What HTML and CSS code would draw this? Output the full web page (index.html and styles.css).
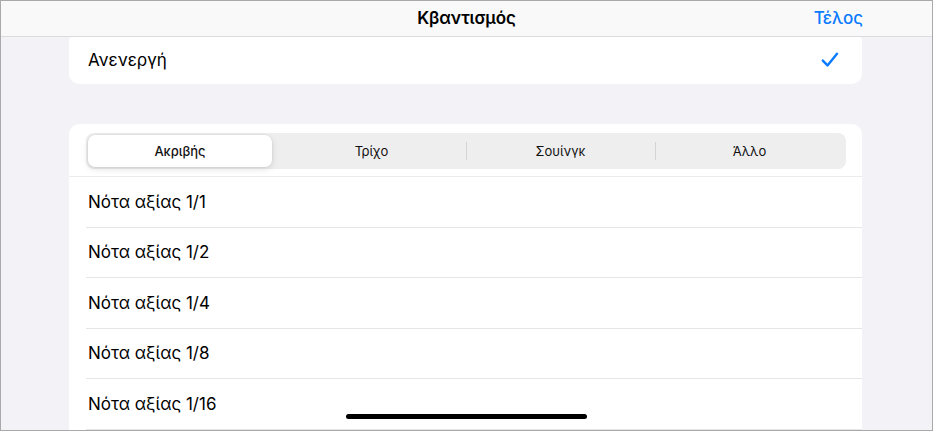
FILE: index.html
```html
<!DOCTYPE html>
<html lang="el">
<head>
<meta charset="utf-8">
<title>Κβαντισμός</title>
<link rel="stylesheet" href="styles.css">
</head>
<body>
<div class="frame">
  <header class="navbar">
    <div class="nav-side"></div>
    <div class="nav-title">Κβαντισμός</div>
    <div class="nav-side nav-right"><span class="nav-done">Τέλος</span></div>
  </header>
  <main class="content">
    <section class="card card-top">
      <div class="option-row">
        <span>Ανενεργή</span>
        <svg class="check" width="18" height="16" viewBox="0 0 18 16"><path d="M1.8 8.6 L6.5 13.4 L16 1.8" fill="none" stroke="#0a7aff" stroke-width="2.4" stroke-linecap="round" stroke-linejoin="round"/></svg>
      </div>
    </section>
    <section class="card card-list">
      <div class="segmented">
        <div class="seg seg-active">Ακριβής</div>
        <div class="seg">Τρίχο</div>
        <div class="seg seg-div">Σουίνγκ</div>
        <div class="seg seg-div">Άλλο</div>
      </div>
      <div class="list">
        <div class="row">Νότα αξίας 1/1</div>
        <div class="row">Νότα αξίας 1/2</div>
        <div class="row">Νότα αξίας 1/4</div>
        <div class="row">Νότα αξίας 1/8</div>
        <div class="row">Νότα αξίας 1/16</div>
      </div>
    </section>
    <div class="home-indicator"></div>
  </main>
</div>
</body>
</html>
```
FILE: styles.css
```css
html, body {
  margin: 0;
  padding: 0;
  background: #ffffff;
}
body {
  font-family: Inter, "Noto Sans", Roboto, sans-serif;
  color: #000;
  -webkit-font-smoothing: antialiased;
}
.frame {
  width: 931px;
  height: 429px;
  border: 1px solid #a9a9ab;
  background: #f2f2f7;
  overflow: hidden;
  position: relative;
  display: flex;
  flex-direction: column;
}
.navbar {
  height: 35px;
  flex: 0 0 35px;
  background: #f9f9f9;
  border-bottom: 1px solid #dcdcde;
  display: grid;
  grid-template-columns: 1fr auto 1fr;
  align-items: center;
  position: relative;
  z-index: 2;
}
.nav-right {
  display: flex;
  justify-content: flex-end;
  padding-right: 69px;
}
.nav-title {
  font-size: 17px;
  font-weight: 600;
  letter-spacing: -0.1px;
  margin-top: -2px;
}
.nav-done {
  color: #0a7aff;
  font-size: 17px;
  font-weight: 500;
  margin-top: -2px;
}
.content {
  flex: 1;
  padding: 0 70px 0 68px;
  display: flex;
  flex-direction: column;
  position: relative;
}
.card {
  background: #ffffff;
}
.card-top {
  border-radius: 3px 3px 10px 10px;
  height: 47px;
}
.option-row {
  height: 100%;
  display: flex;
  align-items: center;
  justify-content: space-between;
  padding: 0 23px 0 19px;
  font-size: 17px;
  margin-top: -1px;
}
.check {
  display: block;
}
.card-list {
  margin-top: 40px;
  border-radius: 10px 10px 0 0;
  flex: 1;
  padding-top: 9px;
}
.segmented {
  margin: 0 16px 0 17px;
  height: 36px;
  background: #eeeeef;
  border-radius: 8px;
  padding: 2px;
  box-sizing: border-box;
  display: grid;
  grid-template-columns: repeat(4, 1fr);
}
.seg {
  display: flex;
  align-items: center;
  justify-content: center;
  font-size: 13px;
  font-weight: 400;
  color: #111;
  position: relative;
  border-radius: 7px;
}
.seg-active {
  background: #ffffff;
  font-weight: 500;
  margin-right: 5px;
  box-shadow: 0 0 0 0.5px rgba(0,0,0,0.06), 0 2px 6px rgba(0,0,0,0.12);
}
.seg-div::before {
  content: "";
  position: absolute;
  left: 0;
  top: 7px;
  bottom: 7px;
  width: 1px;
  background: #d4d4d6;
}
.list {
  margin-top: 7px;
  border-top: 1px solid #ececee;
}
.row {
  box-sizing: border-box;
  height: 50.5px;
  margin-left: 17px;
  padding-left: 2px;
  border-bottom: 1px solid #e6e6e8;
  display: flex;
  align-items: center;
  font-size: 17px;
}
.home-indicator {
  position: absolute;
  left: 345px;
  bottom: 11px;
  width: 241px;
  height: 5px;
  border-radius: 3px;
  background: #000;
}
```
